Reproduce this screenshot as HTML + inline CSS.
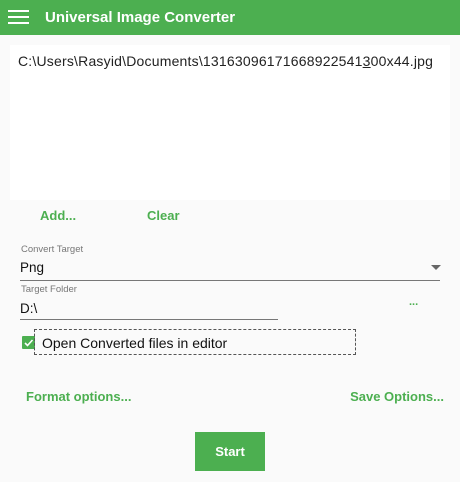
<!DOCTYPE html>
<html><head><style>
body{margin:0;width:460px;height:482px;background:#fafafa;font-family:"Liberation Sans",sans-serif;position:relative;overflow:hidden}
.a{position:absolute;white-space:nowrap}
.g{color:#4caf50;font-weight:bold;font-size:13px}
</style></head><body>
<div class="a" style="left:0;top:0;width:460px;height:35px;background:#4caf50"></div>
<div class="a" style="left:8px;top:10px;width:21px;height:2px;background:#fff"></div>
<div class="a" style="left:8px;top:16px;width:21px;height:2px;background:#fff"></div>
<div class="a" style="left:8px;top:22px;width:21px;height:2px;background:#fff"></div>
<div class="a" style="left:45px;top:9px;color:#fff;font-weight:bold;font-size:15px">Universal Image Converter</div>
<div class="a" style="left:10px;top:45px;width:440px;height:155px;background:#fff"></div>
<div class="a" style="left:18px;top:53px;font-size:14px;letter-spacing:0.2px;color:#222">C:\Users\Rasyid\Documents\13163096171668922541<u>3</u>00x44.jpg</div>
<div class="a g" style="left:40px;top:208px">Add...</div>
<div class="a g" style="left:147px;top:208px">Clear</div>
<div class="a" style="left:21px;top:244px;font-size:9.5px;color:#777">Convert Target</div>
<div class="a" style="left:20px;top:260px;font-size:13.5px;color:#111">Png</div>
<div class="a" style="left:431px;top:265px;border-left:5px solid transparent;border-right:5px solid transparent;border-top:5px solid #666"></div>
<div class="a" style="left:20px;top:280px;width:420px;height:1px;background:#777"></div>
<div class="a" style="left:21px;top:284px;font-size:9.5px;color:#777">Target Folder</div>
<div class="a" style="left:20px;top:301px;font-size:13.5px;color:#111">D:\</div>
<div class="a" style="left:20px;top:319px;width:258px;height:1px;background:#777"></div>
<div class="a g" style="left:409px;top:296px;font-size:11px">...</div>
<div class="a" style="left:22px;top:336px;width:13px;height:13px;background:#4caf50;border-radius:1px"></div>
<svg class="a" style="left:22px;top:336px" width="13" height="13"><path d="M3 7l2.5 2.5L10.5 4" stroke="#fff" stroke-width="1.6" fill="none"/></svg>
<div class="a" style="left:34px;top:329px;width:320px;height:24px;border:1px dashed #555"></div>
<div class="a" style="left:42px;top:335px;font-size:14px;color:#111">Open Converted files in editor</div>
<div class="a g" style="left:26px;top:389px">Format options...</div>
<div class="a g" style="right:16px;top:389px">Save Options...</div>
<div class="a" style="left:195px;top:432px;width:70px;height:39px;background:#4caf50;color:#fff;font-weight:bold;font-size:13px;text-align:center;line-height:39px">Start</div>
</body></html>
